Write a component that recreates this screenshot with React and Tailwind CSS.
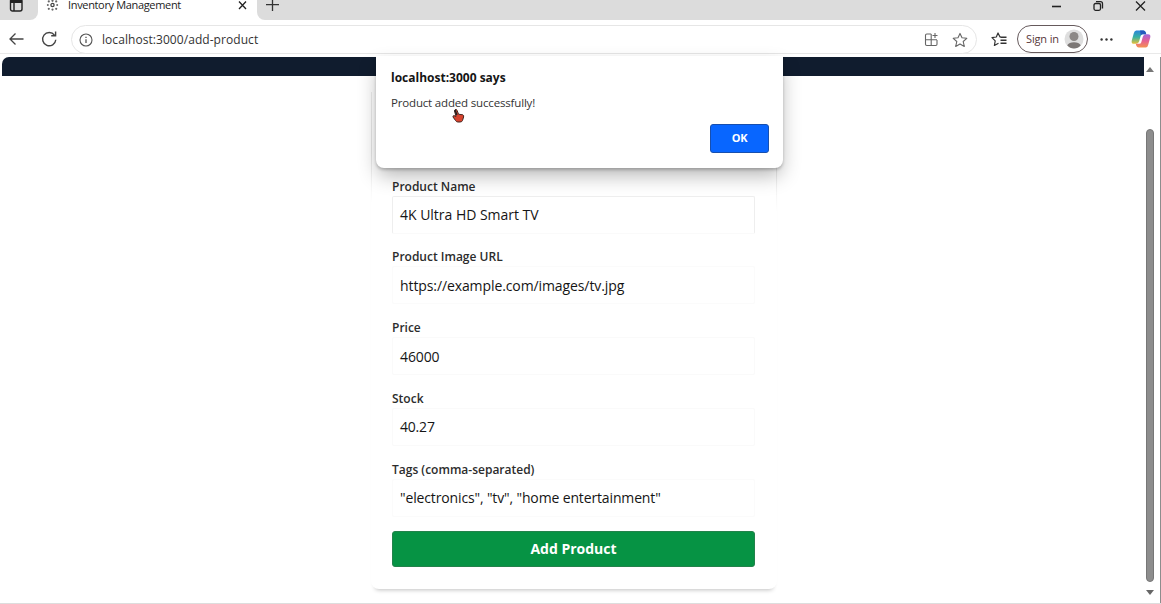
import React from "react";

const fields = [
  { label: "Product Name", value: "4K Ultra HD Smart TV", vt: "tracking-[-0.02px]", border: "border-[#eeeeee] border-b-[#fafafa]" },
  { label: "Product Image URL", value: "https://example.com/images/tv.jpg", vt: "tracking-[-0.1px]", border: "border-[#fbfbfb]" },
  { label: "Price", value: "46000", vt: "tracking-[-0.1px]", border: "border-[#fafafa]" },
  { label: "Stock", value: "40.27", vt: "tracking-[-0.2px]", border: "border-[#fafafa]" },
  { label: "Tags (comma-separated)", value: '"electronics", "tv", "home entertainment"', vt: "tracking-[-0.14px]", border: "border-[#fbfbfb]" },
];

function TabStrip() {
  return (
    <div className="flex h-5 bg-[#dcdcdc]">
      <div className="h-5 w-[38px] shrink-0 bg-white">
        <div className="h-5 rounded-br-lg bg-[#dcdcdc] pl-[9px]">
          <svg className="block" width="15" height="13" viewBox="0 0 15 13" fill="none" stroke="#222" strokeWidth="1.4">
            <rect x="1.5" y="-1" width="11.5" height="12" rx="2" />
            <path d="M1.5 2.2H13M5 2.2V11" />
            <path d="M1.5 1H13" strokeWidth="2" />
          </svg>
        </div>
      </div>
      <div className="flex h-5 w-[219px] shrink-0 bg-white">
        <svg className="ml-[8px] block shrink-0" width="13" height="12" viewBox="0 0 13 12" fill="#666">
          <circle cx="6.5" cy="5" r="1.6" fill="none" stroke="#444" strokeWidth="1.3" />
          <circle cx="6.5" cy="0.8" r="1.1" /><circle cx="6.5" cy="9.6" r="1.1" />
          <circle cx="1.8" cy="5" r="1" /><circle cx="11.2" cy="5" r="1" />
          <circle cx="2.8" cy="1.4" r="1.1" /><circle cx="10.2" cy="1.4" r="1.1" />
          <circle cx="2.8" cy="8.8" r="1.1" /><circle cx="10.2" cy="8.8" r="1.1" />
        </svg>
        <span className="-mt-[3px] ml-[9px] w-[160px] whitespace-nowrap text-[11px] leading-4 tracking-[-0.34px] text-[#222]">Inventory Management</span>
        <svg className="ml-[10px] block" width="9" height="12" viewBox="0 0 9 12" stroke="#222" strokeWidth="1.3">
          <path d="M1 1.5L8 9M8 1.5L1 9" />
        </svg>
      </div>
      <div className="h-5 flex-1 bg-white">
        <div className="flex h-5 justify-between rounded-bl-lg bg-[#dcdcdc] pl-[9px] pr-[15px]">
          <svg className="block" width="13" height="12" viewBox="0 0 13 12" stroke="#333" strokeWidth="1.3">
            <path d="M0 4.7H13M6.5 -2V11" />
          </svg>
          <svg className="block" width="95" height="13" viewBox="0 0 95 13" fill="none" stroke="#222" strokeWidth="1.3">
            <path d="M1 6.5H10" strokeWidth="1.6" />
            <rect x="43" y="3.5" width="6.5" height="6.8" rx="1.5" />
            <path d="M45 1.7H49.5Q51.5 1.7 51.5 3.7V8.5" />
            <path d="M85 1.5L94 10.5M94 1.5L85 10.5" />
          </svg>
        </div>
      </div>
    </div>
  );
}

function Toolbar() {
  return (
    <div className="mb-[3px] flex h-[34px] items-start border-b border-[#e9e9e9] bg-white pl-2 pr-[8px]">
      <svg className="mt-[10px] block shrink-0" width="17" height="18" viewBox="0 0 17 18" fill="none" stroke="#444" strokeWidth="1.3">
        <path d="M15.5 9H2M7.5 3.5L2 9L7.5 14.5" />
      </svg>
      <svg className="ml-[16px] mt-[10px] block shrink-0" width="17" height="18" viewBox="0 0 17 18" fill="none" stroke="#444" strokeWidth="1.4">
        <path d="M14.8 9.8A6.6 6.6 0 1 1 13.5 5.2" />
        <path d="M14.6 1.5V5.8H10.2" />
      </svg>
      <div className="ml-[13px] mt-[5px] flex h-[29px] w-[906px] shrink-0 items-center rounded-full border border-[#e6e6e6] bg-white pl-[7px] pr-[8px]">
        <svg className="block" width="14" height="14" viewBox="0 0 14 14" fill="none" stroke="#555" strokeWidth="1.1">
          <circle cx="7" cy="7" r="6" />
          <path d="M7 6.2V10M7 3.8V5" strokeWidth="1.3" />
        </svg>
        <span className="ml-[9px] flex-1 whitespace-nowrap text-[12px] tracking-[0.06px] text-[#333]">localhost:3000/add-product</span>
        <svg className="block" width="15" height="15" viewBox="0 0 15 15" fill="none" stroke="#666" strokeWidth="1.1">
          <path d="M7.2 2H2.8Q1.5 2 1.5 3.3V12.3Q1.5 13.5 2.8 13.5H11.7Q13 13.5 13 12.3V8M7.2 2V13.5M1.5 7.8H13M11 1V6M8.5 3.5H13.5" />
        </svg>
        <svg className="ml-[13px] block" width="16" height="16" viewBox="0 0 16 16" fill="none" stroke="#666" strokeWidth="1.1" strokeLinejoin="round">
          <path d="M8 1.4L10 5.8L14.8 6.3L11.2 9.5L12.3 14.4L8 11.9L3.7 14.4L4.8 9.5L1.2 6.3L6 5.8Z" />
        </svg>
      </div>
      <svg className="ml-[14px] mt-[12px] block shrink-0" width="17" height="15" viewBox="0 0 17 15" fill="none" stroke="#333" strokeWidth="1.2" strokeLinejoin="round">
        <path d="M10 5H9L7 1L5.3 5L1 5.6L4.2 8.8L3.4 13.5L7.5 11.3" />
        <path d="M9.5 5.3H15.5M9.5 8.3H15.5M9.5 11.3H15.5" strokeWidth="1.4" />
      </svg>
      <div className="ml-[9px] mt-[5px] flex h-[28px] w-[71px] shrink-0 items-center rounded-full border-[1.5px] border-[#665a5c] pl-[8px]">
        <span className="w-[38px] whitespace-nowrap text-[11px] tracking-[-0.15px] text-[#58383a]">Sign in</span>
        <svg className="block" width="20" height="20" viewBox="0 0 20 20">
          <circle cx="10" cy="10" r="9.5" fill="#dedede" />
          <circle cx="10" cy="7.5" r="4.5" fill="#8c8886" />
          <path d="M3.2 16.2Q5 13.3 10 13.3T16.8 16.2Q14 19.4 10 19.4T3.2 16.2Z" fill="#7c7775" />
        </svg>
      </div>
      <svg className="ml-[12px] mt-[17px] block shrink-0" width="13" height="5" viewBox="0 0 13 5" fill="#333">
        <circle cx="1.6" cy="2.5" r="1.2" /><circle cx="6.5" cy="2.5" r="1.2" /><circle cx="11.4" cy="2.5" r="1.2" />
      </svg>
      <svg className="ml-[18px] mt-[9px] block shrink-0" width="20" height="20" viewBox="0 0 21 20">
        <defs>
          <linearGradient id="cl" x1="0" y1="0" x2="0" y2="1">
            <stop offset="0" stopColor="#2a83dc" /><stop offset="0.5" stopColor="#38b2a2" /><stop offset="1" stopColor="#e8bf39" />
          </linearGradient>
          <linearGradient id="cr" x1="0" y1="0" x2="0" y2="1">
            <stop offset="0" stopColor="#a365db" /><stop offset="0.5" stopColor="#e66092" /><stop offset="1" stopColor="#f49350" />
          </linearGradient>
        </defs>
        <path d="M5.5 1H13Q14.8 1 15.4 2.8L16 5H12.3Q10.7 5 10.2 6.7L8.5 12.5Q7.7 15 5.3 15H3.2Q0 15 0.8 11.5L3 3.8Q3.7 1 5.5 1Z" fill="url(#cl)" />
        <path d="M15.5 19H8Q6.2 19 5.6 17.2L5 15H8.7Q10.3 15 10.8 13.3L12.5 7.5Q13.3 5 15.7 5H17.8Q21 5 20.2 8.5L18 16.2Q17.3 19 15.5 19Z" fill="url(#cr)" />
        <path d="M9.5 1H13Q14.8 1 15.4 2.8L16 5H12.3Q10.8 5 10.3 6.5Z" fill="#2459bd" />
      </svg>
    </div>
  );
}

function AlertDialog() {
  return (
    <div className="absolute left-[376px] top-[56px] flex h-[112px] w-[407px] flex-col rounded-b-lg bg-white pl-[15px] pr-[14px] pt-[13px] shadow-[0_2px_3px_rgba(0,0,0,0.2),0_9px_20px_-2px_rgba(0,0,0,0.3)]">
      <div className="h-[17px] whitespace-nowrap text-[12px] font-bold leading-[17px] text-[#151515]">localhost:3000 says</div>
      <div className="mt-[8px] h-[17px] whitespace-nowrap text-[11.5px] leading-[17px] tracking-[-0.17px] text-[#333]">Product added successfully!</div>
      <button className="mt-[13px] h-[29px] w-[59px] self-end rounded-[3px] border border-[#174fae] bg-[#0866ff] text-[11px] font-bold tracking-[-0.4px] text-white">OK</button>
      <svg className="absolute left-[76px] top-[52px]" width="13" height="16" viewBox="0 0 13 16">
        <path d="M3 1.8Q4.2 0.8 5 2.2L6.5 6.2L10.8 6.8Q12 7.2 11.6 9L10.5 12.5Q10 14 8 14H5.8Q4.5 14 3.5 12.5L1 9Q0.6 7.8 2 7.6L4 8.5L2.5 3Z" fill="#d8432e" stroke="#452722" strokeWidth="1" />
        <path d="M3 2L4.8 7" stroke="#222" strokeWidth="1.6" />
      </svg>
    </div>
  );
}

export default function App() {
  return (
    <div className="relative flex h-[604px] w-[1161px] flex-col overflow-hidden bg-white font-['Open_Sans','Noto_Sans',sans-serif]">
      <TabStrip />
      <Toolbar />
      <div className="flex h-[546px] border-r border-[#8d8d8d] pl-[2px]">
        <div className="flex w-[1142px] flex-col items-center">
          <div className="h-[19px] w-full shrink-0 rounded-tl-[7px] bg-[#101c2e]" />
          <div className="ml-[2px] flex h-[513px] w-[406px] shrink-0 rounded-lg bg-white shadow-[0_5px_4px_-4px_rgba(0,0,0,0.25)]">
            <div className="mt-4 h-[112px] w-px bg-linear-to-b from-[#ececec] via-[#e4e4e4] to-white" />
            <div className="flex flex-1 flex-col pl-5 pt-[101.5px]">
              {fields.map((f) => (
                <div key={f.label} className="mb-[14.5px] h-[56.25px] shrink-0">
                  <div className="h-[18px] whitespace-nowrap text-[12px] font-semibold leading-[18px] text-[#2c2c2c]">{f.label}</div>
                  <div className={"flex h-[38px] w-[363px] items-center whitespace-nowrap rounded-[2px] border px-[7px] text-[14px] text-[#151515] " + f.border + " " + f.vt}>{f.value}</div>
                </div>
              ))}
              <button className="-mt-[0.5px] h-[36px] w-[363px] shrink-0 rounded-[3px] border border-[#23824b] bg-[#069344] text-[14px] font-bold text-white">Add Product</button>
            </div>
            <div className="mt-4 h-[120px] w-px bg-linear-to-b from-[#ececec] via-[#e0e0e0] to-white" />
          </div>
        </div>
        <div className="flex w-[16px] flex-col items-center pr-[4px] pt-[10px]">
          <svg className="block shrink-0" width="8" height="5" viewBox="0 0 8 5" fill="#777"><path d="M4 0L8 5H0Z" /></svg>
          <div className="mt-[57px] h-[453px] w-[8px] shrink-0 rounded-full border border-[#777] bg-[#8d8d8d]" />
          <svg className="mt-[8px] block shrink-0" width="8" height="5" viewBox="0 0 8 5" fill="#666"><path d="M4 5L8 0H0Z" /></svg>
        </div>
      </div>
      <div className="h-px bg-[#dddddd]" />
      <AlertDialog />
    </div>
  );
}
